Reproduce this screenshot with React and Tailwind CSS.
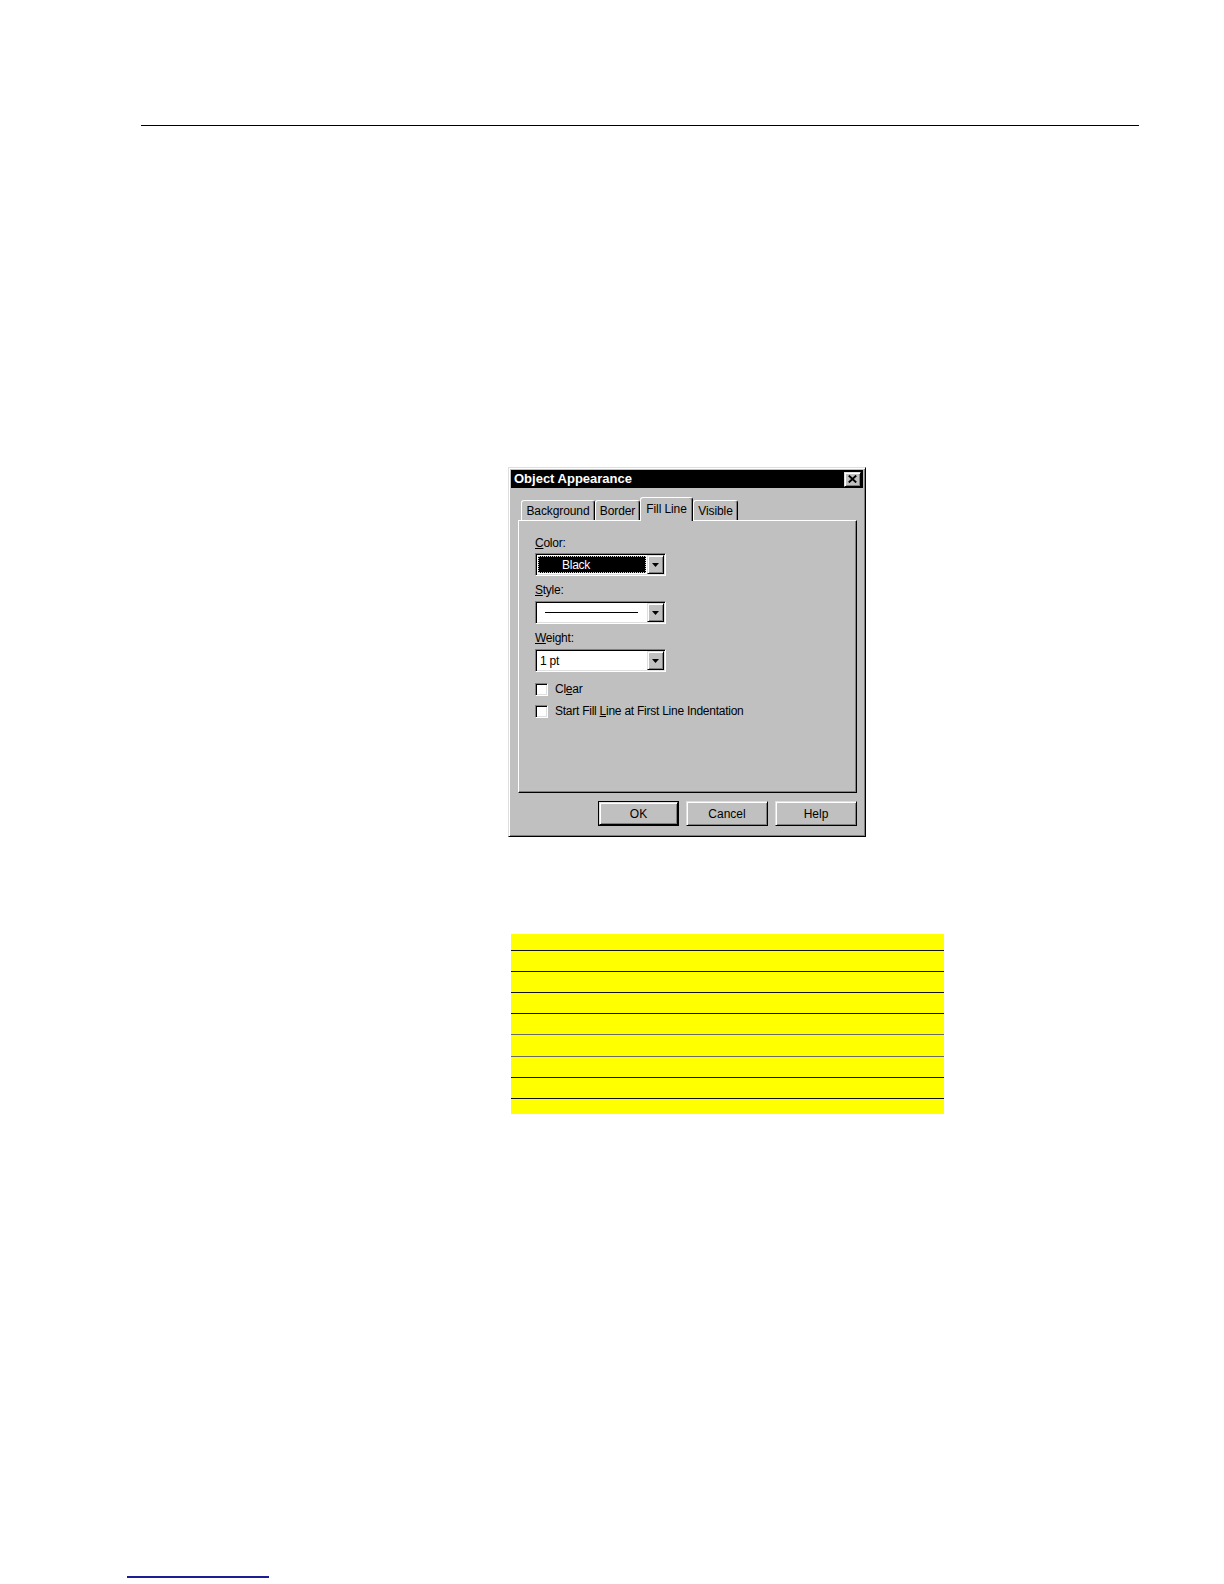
import React from 'react'

const raised = 'border border-t-[#dfdfdf] border-l-[#dfdfdf] border-r-black border-b-black shadow-[inset_1px_1px_0_#fff,inset_-1px_-1px_0_#808080]'
const sunken = 'border border-t-[#808080] border-l-[#808080] border-r-white border-b-white shadow-[inset_1px_1px_0_#000,inset_-1px_-1px_0_#dfdfdf]'

const tabs = [
  { label: 'Background', w: 'w-[74px]' },
  { label: 'Border', w: 'w-[45px]' },
  { label: 'Fill Line', w: 'w-[53px]', active: true },
  { label: 'Visible', w: 'w-[45px]' },
]

const rows = [
  'h-[17px] border-b border-b-[#111]',
  'h-[21px] border-b border-b-[#111]',
  'h-[21px] border-b border-b-[#111]',
  'h-[21px] border-b border-b-[#111]',
  'h-[21px] border-b border-b-[#6b6b6b]',
  'h-[22px] border-b border-b-[#6b6b6b]',
  'h-[21px] border-b border-b-[#111]',
  'h-[21px] border-b border-b-[#111]',
  'h-[15px]',
]

function Arrow() {
  return (
    <div className={'flex w-[17px] items-center justify-center bg-[#c0c0c0] ' + raised}>
      <svg width="7" height="4" viewBox="0 0 7 4">
        <polygon points="0,0 7,0 3.5,4" fill="#000" />
      </svg>
    </div>
  )
}

function Combo({ children }) {
  return (
    <div className={'flex h-[23px] w-[131px] bg-white p-px ' + sunken}>
      <div className="flex min-w-0 flex-1 items-center">{children}</div>
      <Arrow />
    </div>
  )
}

function Check({ children }) {
  return (
    <div className="flex h-[14px] items-center gap-[7px]">
      <div className={'size-[13px] bg-white ' + sunken} />
      <span className="leading-[14px]">{children}</span>
    </div>
  )
}

function Button({ children, primary }) {
  const inner = (
    <div className={'flex h-full w-full items-center justify-center bg-[#c0c0c0] ' + raised}>{children}</div>
  )
  if (primary) {
    return <div className="h-[25px] w-[81px] border border-black">{inner}</div>
  }
  return <div className="h-[25px] w-[82px]">{inner}</div>
}

function Dialog() {
  return (
    <div className="mt-[341px] ml-[508px] h-[370px] w-[358px] border border-t-[#dfdfdf] border-l-[#dfdfdf] border-r-black border-b-black bg-[#c0c0c0] p-[2px] shadow-[inset_1px_1px_0_#fff,inset_-1px_-1px_0_#808080]">
      <div className="flex h-[18px] items-center justify-between bg-black pl-[3px] pr-[2px]">
        <span className="text-[13px] font-bold leading-[18px] text-white">Object Appearance</span>
        <div className={'flex h-[15px] w-[17px] items-center justify-center bg-[#c0c0c0] ' + raised}>
          <svg width="9" height="8" viewBox="0 0 9 8">
            <path d="M0.8 0.6 L8.2 7.4 M8.2 0.6 L0.8 7.4" stroke="#000" strokeWidth="2" />
          </svg>
        </div>
      </div>

      <div className="relative z-10 mt-[9px] flex h-[23px] items-end pl-[10px] text-[12px] tracking-[-0.1px]">
        {tabs.map(t =>
          t.active ? (
            <div
              key={t.label}
              className={t.w + ' -mb-px flex h-[24px] items-start justify-center rounded-t-[3px] border-t border-l border-r border-t-white border-l-white border-r-black bg-[#c0c0c0] pt-[4px] leading-[14px] shadow-[inset_-1px_0_0_#808080]'}
            >
              {t.label}
            </div>
          ) : (
            <div
              key={t.label}
              className={t.w + ' flex h-[20px] items-center justify-center rounded-t-[3px] border-t border-l border-r border-t-white border-l-white border-r-black leading-[14px] shadow-[inset_-1px_0_0_#808080]'}
            >
              {t.label}
            </div>
          )
        )}
      </div>

      <div className="ml-[7px] mr-[6px] flex h-[273px] flex-col items-start border border-t-white border-l-white border-r-black border-b-black pl-[16px] text-[12px] leading-[14px] tracking-[-0.25px] shadow-[inset_-1px_-1px_0_#808080]">
        <div className="mt-[15px]"><span className="underline">C</span>olor:</div>
        <div className="mt-[3px]">
          <Combo>
            <div className="m-px flex h-[17px] flex-1 items-center border border-dotted border-[#cfcfcf] bg-black pl-[23px] text-white">
              Black
            </div>
          </Combo>
        </div>
        <div className="mt-[7px]"><span className="underline">S</span>tyle:</div>
        <div className="mt-[4px]">
          <Combo>
            <div className="ml-[8px] h-px w-[93px] bg-black" />
          </Combo>
        </div>
        <div className="mt-[7px]"><span className="underline">W</span>eight:</div>
        <div className="mt-[4px]">
          <Combo>
            <span className="pl-[3px]">1 pt</span>
          </Combo>
        </div>
        <div className="mt-[10px]">
          <Check>Cl<span className="underline">e</span>ar</Check>
        </div>
        <div className="mt-[8px]">
          <Check>Start Fill <span className="underline">L</span>ine at First Line Indentation</Check>
        </div>
      </div>

      <div className="mt-[8px] mr-[6px] flex justify-end gap-[7px] text-[12px]">
        <Button primary>OK</Button>
        <Button>Cancel</Button>
        <Button>Help</Button>
      </div>
    </div>
  )
}

export default function App() {
  return (
    <div className="flex min-h-[1584px] w-[1224px] flex-col items-start bg-white font-['Liberation_Sans',Arial,sans-serif] text-black">
      <div className="mt-[125px] ml-[141px] h-px w-[998px] bg-black" />
      <Dialog />
      <div className="mt-[97px] ml-[511px] flex w-[433px] flex-col bg-[#ffff00]">
        {rows.map((r, i) => (
          <div key={i} className={r} />
        ))}
      </div>
      <div className="mt-[462px] ml-[127px] h-[2px] w-[142px] bg-[#1c1c94]" />
    </div>
  )
}
